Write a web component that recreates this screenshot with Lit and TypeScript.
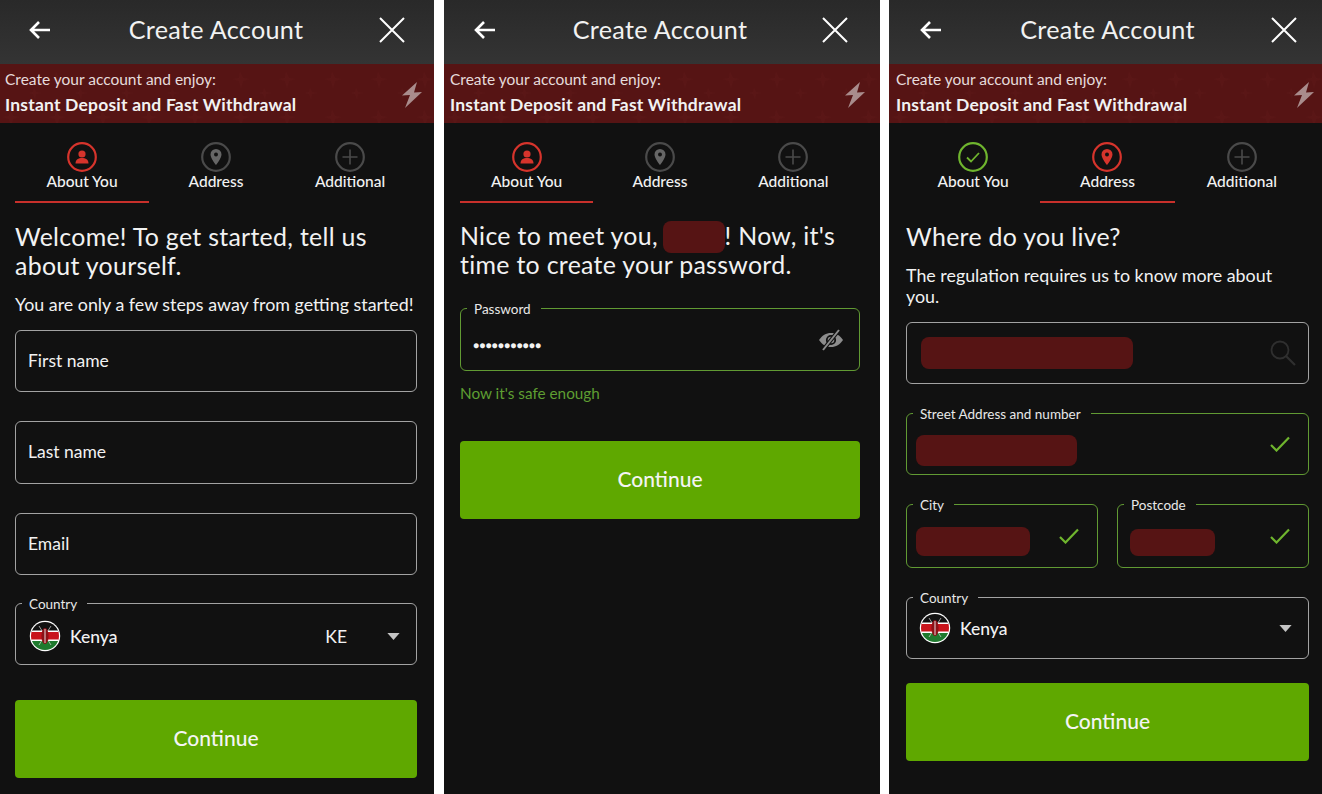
import { LitElement, html, css, svg } from "lit";
import { customElement } from "lit/decorators.js";

const arrow = html`<svg class="arrow" viewBox="0 0 22 20"><path d="M10 2 2 10l8 8M2.5 10H21" fill="none" stroke="#fff" stroke-width="2.6"/></svg>`;
const close = html`<svg class="close" viewBox="0 0 26 26"><path d="M1 1l24 24M25 1 1 25" fill="none" stroke="#fff" stroke-width="2"/></svg>`;
const bolt = html`<svg class="bolt" viewBox="0 0 20 26"><path d="M15 0 0 13.500l8-.5-5 13 17-16-8 .5z" fill="#a98c8c"/></svg>`;
const check = html`<svg class="check" viewBox="0 0 20 16"><path d="M1 9l5.500 5.500L19 1.500" fill="none" stroke="#6fb52e" stroke-width="2.200"/></svg>`;
const eye = html`<svg class="eye" viewBox="0 0 26 22"><path d="M1 11c3-4.500 7-7 12-7s9 2.500 12 7c-3 4.500-7 7-12 7S4 15.500 1 11z" fill="#8c8c8c"/><circle cx="13" cy="11" r="4.200" fill="none" stroke="#111" stroke-width="1.800"/><path d="M21 1 5 21" stroke="#111" stroke-width="4"/><path d="M21 1 5 21" stroke="#8c8c8c" stroke-width="2"/></svg>`;
const search = html`<svg class="search" viewBox="0 0 26 26"><circle cx="10" cy="10" r="8.500" fill="none" stroke="#2f2f2f" stroke-width="1.800"/><path d="M16 16l9 9" stroke="#2f2f2f" stroke-width="2.200"/></svg>`;
const caret = html`<svg class="caret" viewBox="0 0 14 8"><path d="M0 0h14L7 8z" fill="#c4c4c4"/></svg>`;
const flag = html`<svg class="flag" viewBox="0 0 32 32">
  <defs><clipPath id="fc"><circle cx="16" cy="16" r="14"/></clipPath></defs>
  <circle cx="16" cy="16" r="15.200" fill="#fff"/>
  <g clip-path="url(#fc)">
    <rect width="32" height="11" y="1" fill="#111"/>
    <rect width="32" height="2" y="10.500" fill="#fff"/>
    <rect width="32" height="8" y="12" fill="#c8141c"/>
    <rect width="32" height="2" y="19.500" fill="#fff"/>
    <rect width="32" height="11" y="21" fill="#1f7a2e"/>
    <path d="M10 6l12 19M22 6 10 25" stroke="#ddd" stroke-width=".7"/>
    <ellipse cx="16" cy="16" rx="3.600" ry="8" fill="#8c1016"/>
    <path d="M16 9v14" stroke="#eee" stroke-width=".9"/>
  </g></svg>`;

function stepIcon(kind: string, state: string) {
  const c = state === "on" ? "#d6342c" : state === "done" ? "#6fb52e" : "#4a4a4a";
  const inner =
    kind === "user"
      ? svg`<circle cx="15" cy="12" r="3.600" fill="${c}"/><path d="M8.500 21.500c0-3.800 2.800-5.500 6.500-5.500s6.500 1.700 6.500 5.500z" fill="${c}"/>`
      : kind === "pin"
      ? svg`<path d="M15 7a5.500 5.500 0 0 0-5.500 5.500C9.500 16.500 15 23 15 23s5.500-6.500 5.500-10.500A5.500 5.500 0 0 0 15 7z" fill="${c === "#4a4a4a" ? "#666" : c}"/><circle cx="15" cy="12.500" r="2" fill="#111"/>`
      : kind === "check"
      ? svg`<path d="M9 15.500l4 4 8-8.500" fill="none" stroke="${c}" stroke-width="1.800"/>`
      : svg`<path d="M15 7.500v15M7.500 15h15" fill="none" stroke="${c}" stroke-width="1.600"/>`;
  return html`<svg class="step-icon" viewBox="0 0 30 30"><circle cx="15" cy="15" r="13.800" fill="none" stroke="${c}" stroke-width="2.200"/>${inner}</svg>`;
}

@customElement("app-root")
export class AppRoot extends LitElement {
  static styles = css`
    :host { display: block; width: 1322px; height: 794px; background: #fff; overflow: hidden;
      font-family: Lato, "Open Sans", sans-serif; color: #f2f2f2; }
    * { box-sizing: border-box; }
    .page { display: flex; height: 794px; }
    .panel { background: #111; height: 794px; flex: none; display: flex; flex-direction: column; }
    .p1 { width: 434px; --l: 15px; --r: 17px; --br: 12px; --bl: 5px; }
    .p2 { width: 436px; margin-left: 10px; --l: 16px; --r: 20px; --br: 15px; --bl: 6px; }
    .p3 { width: 433px; margin-left: 9px; --l: 17px; --r: 13px; --br: 8px; --bl: 7px; }

    .head { height: 64px; flex: none; background: linear-gradient(#292929, #343434);
      display: flex; align-items: center; justify-content: space-between;
      padding: 0 calc(var(--r) + 12px) 4px calc(var(--l) + 14px); position: relative; }
    .title { position: absolute; left: var(--l); right: var(--r); top: 13px; text-align: center;
      font-size: 25.200px; line-height: 32px; letter-spacing: .3px; }
    .arrow { width: 22px; height: 20px; }
    .close { width: 26px; height: 26px; }

    .banner { height: 59px; flex: none; background: #561414; position: relative; overflow: hidden;
      padding: 6px 0 0 var(--bl); }
    .tex { position: absolute; inset: 0; width: 100%; height: 100%; }
    .banner p { position: relative; margin: 0; }
    .b1 { font-size: 15.500px; line-height: 18px; color: #e6dcdc; }
    .b2 { font-size: 17.500px; line-height: 20px; margin-top: 7px !important; font-weight: 700; letter-spacing: .2px; }
    .bolt { position: absolute; right: var(--br); top: 18px; width: 20px; height: 26px; }

    .body { padding: 0 var(--r) 0 var(--l); flex: 1; display: flex; flex-direction: column; }
    .tabs { display: grid; grid-template-columns: repeat(3, 1fr); height: 80px; flex: none; }
    .tab { display: flex; flex-direction: column; align-items: center; padding-top: 19px; height: 80px; }
    .tab.on { border-bottom: 2px solid #c8302b; height: 80px; }
    .step-icon { width: 30px; height: 30px; }
    .tab span { font-size: 15.500px; line-height: 18px; font-weight: 500; }

    h2 { font-weight: 400; font-size: 24.900px; line-height: 29px; margin: 0; letter-spacing: .3px; }
    .sub { font-size: 17.850px; line-height: 21px; margin: 0; }
    .p1 h2 { margin-top: 19px; }
    .p1 .sub { margin-top: 14px; }
    .p2 h2 { margin-top: 18px; }
    .p3 h2 { margin-top: 19px; }
    .p3 .sub { margin-top: 14px; max-width: 392px; }
    .red { display: inline-block; background: #561414; border-radius: 8px; }
    .name { width: 62px; height: 32px; vertical-align: -2px; margin: -6px 0 -6px -2px; }

    .field { position: relative; border: 1px solid #a3a3a3; border-radius: 6px; height: 62px; flex: none;
      display: flex; align-items: center; padding: 0 12px; font-size: 17.500px; }
    .field.ok { border-color: #619a33; }
    .lbl { position: absolute; left: 6px; top: -8px; background: #111; padding: 0 10px 0 7px;
      font-size: 13.500px; line-height: 17px; color: #e8e8e8; }
    .flag { width: 32px; height: 32px; flex: none; }
    .p1 .flag { margin-left: 1px; }
    .name-c { margin-left: 9px; flex: 1; font-weight: 500; }
    .ke { margin-right: 40px; }
    .caret { width: 13px; height: 7px; flex: none; margin-right: 4px; }
    .check { width: 20px; height: 16px; flex: none; margin-left: auto; }
    .eye { width: 26px; height: 22px; flex: none; margin: -7px 3px 0 auto; }
    .search { width: 26px; height: 26px; flex: none; margin-left: auto; }
    .dots { font-size: 10px; letter-spacing: .2px; padding-top: 2px; }
    .hint { color: #5e9e32; font-size: 15.300px; line-height: 20px; margin: 12px 0 0; }

    .btn { height: 78px; flex: none; background: #5fa800; border-radius: 4px; display: flex;
      align-items: center; justify-content: center; font-size: 21px; font-weight: 500; color: #f4f4f4;
      padding-bottom: 4px; }

    .a1 { margin-top: 15px; padding-bottom: 2px; }
    .a2 { margin-top: 29px; height: 63px; padding-bottom: 2px; }
    .a3 { margin-top: 29px; padding-bottom: 2px; }
    .a4 { margin-top: 28px; padding-top: 4px; }
    .b { margin-top: 35px; }
    .pw { margin-top: 29px; height: 63px; padding-top: 8px; }
    .b2nd { margin-top: 38px; }
    .c1 { margin-top: 15px; }
    .c1 .r1 { width: 212px; height: 32px; margin-left: 2px; }
    .c2 { margin-top: 29px; padding: 8px 18px 0 9px; }
    .r2 { width: 161px; height: 31px; margin-top: 4px; }
    .row { display: grid; grid-template-columns: 192px 192px; column-gap: 19px; margin-top: 29px; }
    .row .field { height: 64px; padding: 8px 18px 0 9px; }
    .r3 { width: 114px; height: 29px; margin-top: 2px; }
    .r4 { width: 85px; height: 27px; margin: 5px 0 0 3px; }
    .row .check { margin-top: -8px; }
    .c2 .check { margin-top: -8px; }
    .c4 { margin-top: 29px; padding: 0 12px; }
    .b3 { margin-top: 24px; }
  `;

  private chrome() {
    return html`
      <div class="head">${arrow}<div class="title">Create Account</div>${close}</div>
      <div class="banner">
        <svg class="tex">
          <defs><pattern id="t" width="46" height="38" patternUnits="userSpaceOnUse">
            <path d="M10 8l3 6 6 1-6 2-2 7-2-7-6-2 6-1zM34 24l2 4 5 1-5 1-1 5-2-5-4-1 4-1z" fill="#5a1616"/>
          </pattern></defs>
          <rect width="100%" height="100%" fill="url(#t)"/>
        </svg>
        <p class="b1">Create your account and enjoy:</p>
        <p class="b2">Instant Deposit and Fast Withdrawal</p>
        ${bolt}
      </div>`;
  }

  private tabs(active: number) {
    const t = [
      ["About You", active > 0 ? "check" : "user"],
      ["Address", "pin"],
      ["Additional", "plus"],
    ];
    return html`<div class="tabs">
      ${t.map(([label, kind], i) => html`
        <div class="tab ${i === active ? "on" : ""}">
          ${stepIcon(kind, i === active ? "on" : i < active ? "done" : "off")}
          <span>${label}</span>
        </div>`)}
    </div>`;
  }

  render() {
    return html`<div class="page">
      <section class="panel p1">
        ${this.chrome()}
        <div class="body">
          ${this.tabs(0)}
          <h2>Welcome! To get started, tell us about yourself.</h2>
          <p class="sub">You are only a few steps away from getting started!</p>
          <div class="field a1">First name</div>
          <div class="field a2">Last name</div>
          <div class="field a3">Email</div>
          <div class="field a4"><span class="lbl">Country</span>${flag}<span class="name-c">Kenya</span><span class="ke">KE</span>${caret}</div>
          <div class="btn b">Continue</div>
        </div>
      </section>
      <section class="panel p2">
        ${this.chrome()}
        <div class="body">
          ${this.tabs(0)}
          <h2>Nice to meet you, <span class="red name"></span>! Now, it's time to create your password.</h2>
          <div class="field ok pw"><span class="lbl">Password</span><span class="dots">●●●●●●●●●●●</span>${eye}</div>
          <p class="hint">Now it's safe enough</p>
          <div class="btn b2nd">Continue</div>
        </div>
      </section>
      <section class="panel p3">
        ${this.chrome()}
        <div class="body">
          ${this.tabs(1)}
          <h2>Where do you live?</h2>
          <p class="sub">The regulation requires us to know more about you.</p>
          <div class="field c1"><span class="red r1"></span>${search}</div>
          <div class="field ok c2"><span class="lbl">Street Address and number</span><span class="red r2"></span>${check}</div>
          <div class="row">
            <div class="field ok"><span class="lbl">City</span><span class="red r3"></span>${check}</div>
            <div class="field ok"><span class="lbl">Postcode</span><span class="red r4"></span>${check}</div>
          </div>
          <div class="field c4"><span class="lbl">Country</span>${flag}<span class="name-c">Kenya</span>${caret}</div>
          <div class="btn b3">Continue</div>
        </div>
      </section>
    </div>`;
  }
}
